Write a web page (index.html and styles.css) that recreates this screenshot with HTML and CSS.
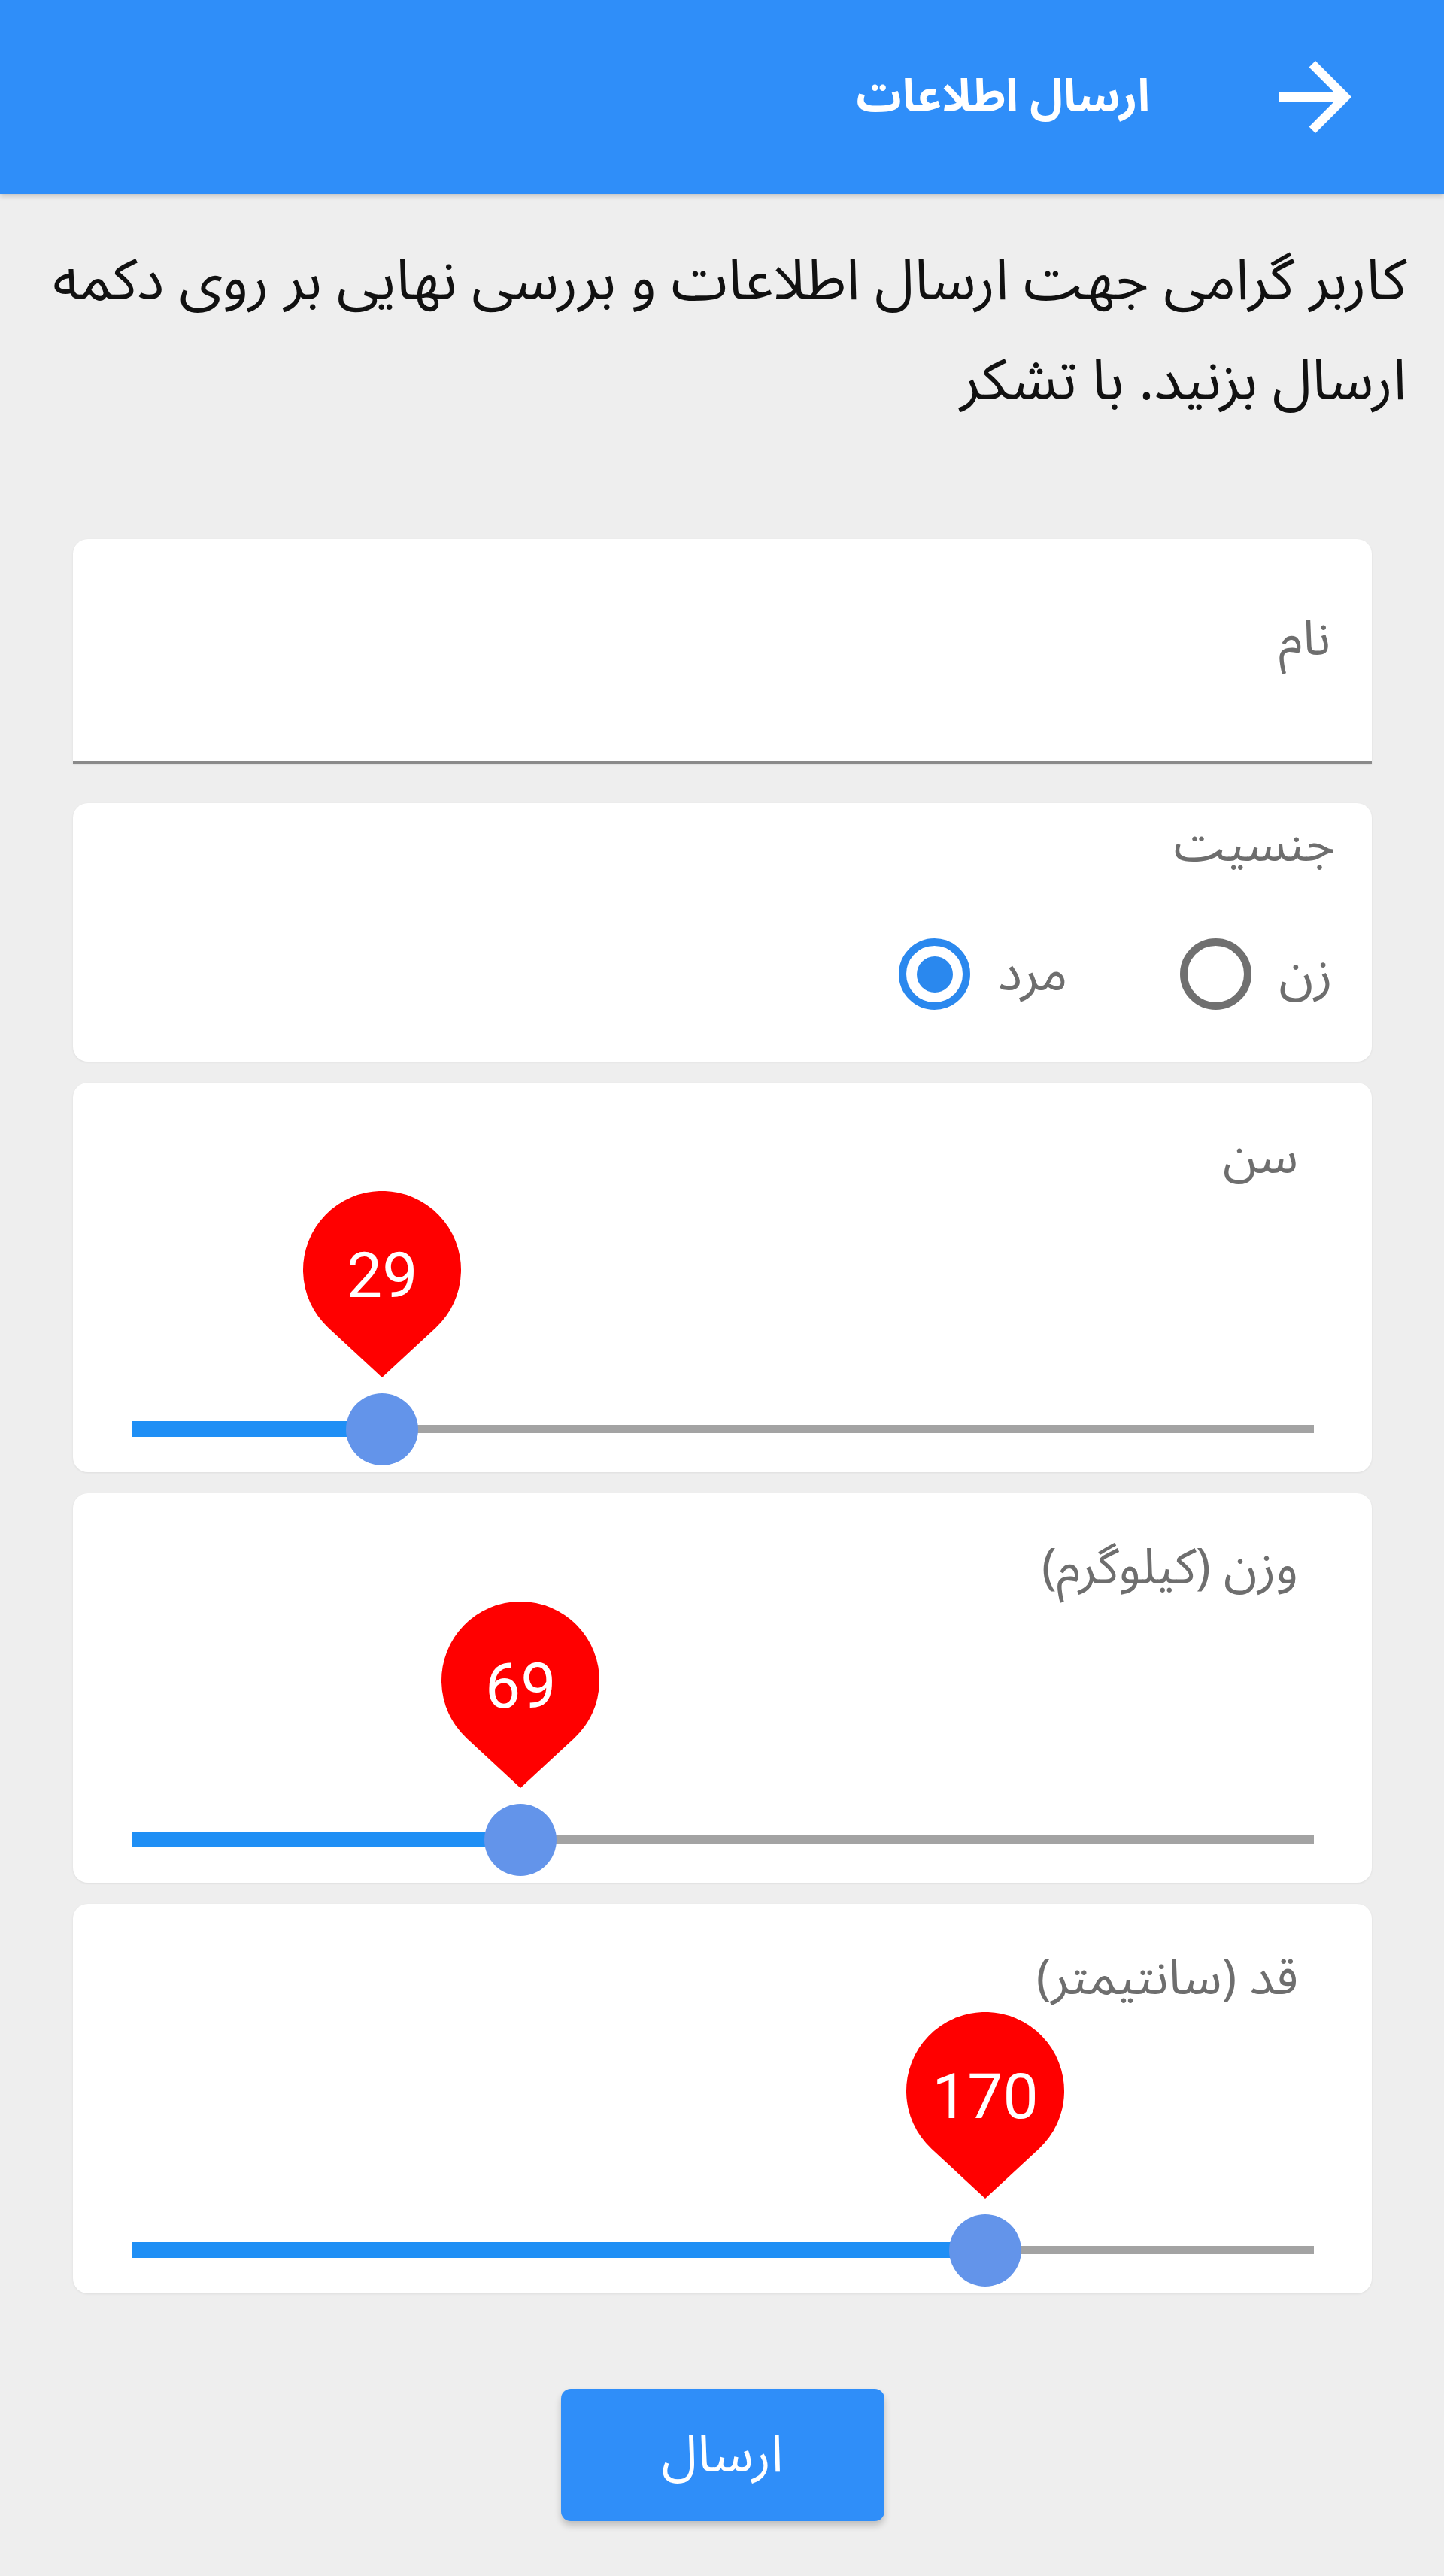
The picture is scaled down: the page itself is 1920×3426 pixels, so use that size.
FILE: index.html
```html
<!DOCTYPE html>
<html lang="fa" dir="rtl">
<head>
<meta charset="utf-8">
<title>ارسال اطلاعات</title>
<link rel="stylesheet" href="styles.css">
</head>
<body>
<header class="appbar">
  <svg class="back" viewBox="0 0 24 24" aria-hidden="true"><path d="M12 4l-1.41 1.41L16.17 11H4v2h12.17l-5.58 5.59L12 20l8-8z"/></svg>
  <h1 class="title">ارسال اطلاعات</h1>
</header>
<main>
  <p class="intro"><span class="line">کاربر گرامی جهت ارسال اطلاعات و بررسی نهایی بر روی دکمه</span><span class="line">ارسال بزنید. با تشکر</span></p>
  <form class="form">
    <div class="card field">
      <span class="label">نام</span>
    </div>
    <div class="card gender">
      <div class="label">جنسیت</div>
      <div class="radios">
        <div class="option"><span class="opt-text">زن</span><span class="radio"></span></div>
        <div class="option"><span class="opt-text">مرد</span><span class="radio on"></span></div>
      </div>
    </div>
    <div class="card slider-card">
      <div class="label">سن</div>
      <div class="slider">
        <div class="fill" style="width:21.2%"></div>
        <div class="thumb" style="left:21.2%"></div>
        <div class="pin" style="left:21.2%">
          <svg viewBox="0 0 210 248" aria-hidden="true"><path d="M105 248 L33.7 182 A105 105 0 1 1 176.3 182 Z"/></svg>
          <span class="pin-value">29</span>
        </div>
      </div>
    </div>
    <div class="card slider-card">
      <div class="label">وزن (کیلوگرم)</div>
      <div class="slider">
        <div class="fill" style="width:32.9%"></div>
        <div class="thumb" style="left:32.9%"></div>
        <div class="pin" style="left:32.9%">
          <svg viewBox="0 0 210 248" aria-hidden="true"><path d="M105 248 L33.7 182 A105 105 0 1 1 176.3 182 Z"/></svg>
          <span class="pin-value">69</span>
        </div>
      </div>
    </div>
    <div class="card slider-card">
      <div class="label">قد (سانتیمتر)</div>
      <div class="slider">
        <div class="fill" style="width:72.2%"></div>
        <div class="thumb" style="left:72.2%"></div>
        <div class="pin" style="left:72.2%">
          <svg viewBox="0 0 210 248" aria-hidden="true"><path d="M105 248 L33.7 182 A105 105 0 1 1 176.3 182 Z"/></svg>
          <span class="pin-value">170</span>
        </div>
      </div>
    </div>
    <div class="actions">
      <button type="button" class="submit">ارسال</button>
    </div>
  </form>
</main>
</body>
</html>
```
FILE: styles.css
```css
* { box-sizing: border-box; }
html { background: #eeeeee; }
body {
  margin: 0;
  min-height: 3426px;
  background: #eeeeee;
  font-family: "Noto Sans Arabic", "DejaVu Sans", sans-serif;
  color: #111;
}
.appbar {
  height: 258px;
  background: #2f8ef9;
  display: flex;
  align-items: center;
  padding-right: 99px;
  box-shadow: 0 3px 6px rgba(0, 0, 0, 0.18);
  position: relative;
}
.back { width: 144px; height: 144px; fill: #ffffff; flex: none; }
.title {
  margin: 0 148px 0 0;
  color: #ffffff;
  font-size: 60px;
  font-weight: bold;
}
.intro {
  margin: 0;
  padding: 50px 50px 0 48px;
  font-size: 76px;
  line-height: 133px;
  color: #111111;
  white-space: nowrap;
}
.intro .line { display: block; height: 133px; }
.form {
  margin: 143px 96px 0 97px;
  display: flex;
  flex-direction: column;
}
.card {
  background: #ffffff;
  border-radius: 20px;
  box-shadow: 0 1px 3px rgba(0, 0, 0, 0.07);
}
.label {
  font-size: 66px;
  line-height: 60px;
  color: #6e6e6e;
}
.field {
  height: 299px;
  border-radius: 20px 20px 0 0;
  border-bottom: 4px solid #8a8a8a;
  display: flex;
  align-items: center;
  padding: 0 55px 30px 0;
}
.gender {
  margin-top: 52px;
  height: 344px;
  padding: 26px 49px 0 0;
}
.radios {
  display: flex;
  align-items: center;
  gap: 150px;
  margin-top: 94px;
  padding-right: 3px;
}
.option { display: flex; align-items: center; gap: 36px; }
.opt-text { font-size: 68px; line-height: 60px; color: #6e6e6e; }
.radio {
  width: 95px;
  height: 95px;
  border: 10px solid #707070;
  border-radius: 50%;
  display: flex;
  align-items: center;
  justify-content: center;
}
.radio.on { border-color: #2a88ee; }
.radio.on::after {
  content: "";
  width: 48px;
  height: 48px;
  border-radius: 50%;
  background: #2a88ee;
}
.slider-card {
  margin-top: 28px;
  height: 518px;
  display: flex;
  flex-direction: column;
  padding: 69px 77px 0 78px;
}
.slider-card .label { padding-right: 21px; }
.slider {
  position: relative;
  direction: ltr;
  height: 11px;
  background: #a3a3a3;
  margin-top: auto;
  margin-bottom: 52px;
}
.fill {
  position: absolute;
  left: 0;
  top: -5px;
  height: 21px;
  background: #1f8ff5;
}
.thumb {
  position: absolute;
  top: -42px;
  width: 96px;
  height: 96px;
  margin-left: -48px;
  border-radius: 50%;
  background: #6394ea;
}
.pin {
  position: absolute;
  bottom: 74px;
  width: 210px;
  height: 248px;
  margin-left: -105px;
}
.pin svg { display: block; width: 210px; height: 248px; fill: #ff0000; }
.pin-value {
  position: absolute;
  top: 8px;
  left: 0;
  right: 0;
  height: 210px;
  line-height: 210px;
  text-align: center;
  color: #ffffff;
  font-family: Roboto, "Liberation Sans", sans-serif;
  font-size: 84px;
}
.actions {
  display: flex;
  justify-content: center;
  margin-top: 127px;
}
.submit {
  width: 430px;
  height: 176px;
  border: 0;
  border-radius: 13px;
  background: #2f8ef9;
  color: #ffffff;
  font-family: "Noto Sans Arabic", "DejaVu Sans", sans-serif;
  font-size: 69px;
  box-shadow: 0 6px 10px rgba(0, 0, 0, 0.2);
}
```
